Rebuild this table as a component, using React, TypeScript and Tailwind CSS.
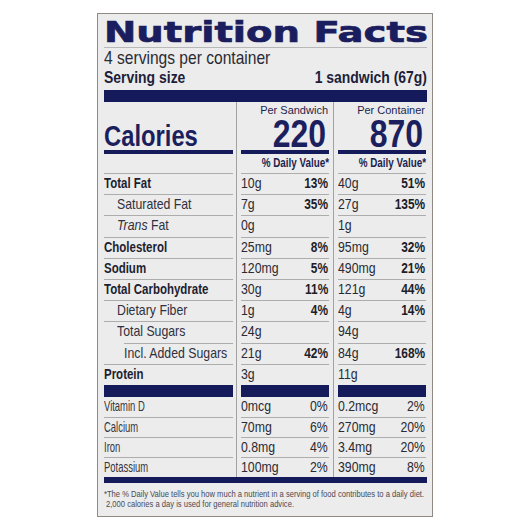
import React from "react";

const rule = "border-[#adadad]";
const navyBg = "bg-[#151a5a]";

type Nutrient = {
  label: React.ReactNode;
  kind: "main" | "sub" | "subsub";
  a: string;
  ap?: string;
  b: string;
  bp?: string;
};

const nutrients: Nutrient[] = [
  { label: "Total Fat", kind: "main", a: "10g", ap: "13%", b: "40g", bp: "51%" },
  { label: "Saturated Fat", kind: "sub", a: "7g", ap: "35%", b: "27g", bp: "135%" },
  { label: <><i>Trans</i> Fat</>, kind: "sub", a: "0g", b: "1g" },
  { label: "Cholesterol", kind: "main", a: "25mg", ap: "8%", b: "95mg", bp: "32%" },
  { label: "Sodium", kind: "main", a: "120mg", ap: "5%", b: "490mg", bp: "21%" },
  { label: "Total Carbohydrate", kind: "main", a: "30g", ap: "11%", b: "121g", bp: "44%" },
  { label: "Dietary Fiber", kind: "sub", a: "1g", ap: "4%", b: "4g", bp: "14%" },
  { label: "Total Sugars", kind: "sub", a: "24g", b: "94g" },
  { label: "Incl. Added Sugars", kind: "subsub", a: "21g", ap: "42%", b: "84g", bp: "168%" },
  { label: "Protein", kind: "main", a: "3g", b: "11g" },
];

const vitamins = [
  ["Vitamin D", "0mcg", "0%", "0.2mcg", "2%"],
  ["Calcium", "70mg", "6%", "270mg", "20%"],
  ["Iron", "0.8mg", "4%", "3.4mg", "20%"],
  ["Potassium", "100mg", "2%", "390mg", "8%"],
];

// condensed text: Arial metrics squeezed to Helvetica Condensed width
function N({ children, right }: { children: React.ReactNode; right?: boolean }) {
  return (
    <span className={`inline-block scale-x-[0.82] whitespace-nowrap ${right ? "origin-right" : "origin-left"}`}>
      {children}
    </span>
  );
}

function Col({ gap, children }: { gap: string; children: React.ReactNode }) {
  return <div className={`${gap} border-l border-[#a2a2a2] pl-[4px]`}>{children}</div>;
}

function Cell({ value, pct, lined = true, light = false }: { value: string; pct?: string; lined?: boolean; light?: boolean }) {
  return (
    <div className={`flex h-full w-[88px] justify-between text-[15px] leading-[18px] text-[#2a2a33] ${lined ? "border-t " + rule : ""}`}>
      <N>{value}</N>
      {pct && (
        <span className={light ? "pr-[1px]" : "pr-[1px] text-[14.5px] font-bold text-[#1d1d28]"}>
          <N right>{pct}</N>
        </span>
      )}
    </div>
  );
}

function Head({ gap, title, value }: { gap: string; title: string; value: string }) {
  return (
    <Col gap={gap}>
      <div className="flex h-full w-[88px] flex-col justify-end text-right text-[#1c1f4e]">
        <div className="mb-[3px] pr-[1px] text-[11px] leading-[12px]">{title}</div>
        <div className="h-[31px] pr-[3px] text-[39px] font-bold leading-[30px] text-[#1c1f5e]">
          <N right>{value}</N>
        </div>
        <div className={`h-[4px] ${navyBg}`} />
        <div className="mt-[2px] mb-[3px] text-[12px] font-bold leading-[14px]">
          <N right>% Daily Value*</N>
        </div>
      </div>
    </Col>
  );
}

function Bar() {
  return <div className={`h-[12px] w-[88px] ${navyBg}`} />;
}

export default function App() {
  return (
    <div className="flex h-[530px] w-full items-center justify-center bg-white">
      <div className="w-[336px] border border-[#8f8a84] bg-[#ececec] pt-[3px] pr-[5px] pb-[7px] pl-[6px] font-['Liberation_Sans',Arial,sans-serif]">
        <div className="border-b border-[#b8b8b8] font-['DejaVu_Sans',sans-serif] text-[29px] font-bold leading-[30px] text-[#1a1d5e]">
          <span className="inline-block origin-left scale-x-[1.33] [-webkit-text-stroke:0.7px_#1a1d5e]">Nutrition Facts</span>
        </div>
        <div className="text-[19px] leading-[20px] text-[#2a2a33]">
          <N>4 servings per container</N>
        </div>
        <div className="flex justify-between text-[17px] font-bold leading-[19px] text-[#1d1e3a]">
          <N>Serving size</N>
          <N right>1 sandwich (67g)</N>
        </div>
        <div className={`mt-[3px] h-[12px] ${navyBg}`} />

        <div className="flex h-[71px]">
          <div className="flex w-[129px] flex-col justify-end">
            <div className="text-[29px] font-bold leading-[28px] text-[#1c1f5e]">
              <N>Calories</N>
            </div>
            <div className={`h-[4px] ${navyBg}`} />
            <div className="h-[19px]" />
          </div>
          <Head gap="ml-[3px]" title="Per Sandwich" value="220" />
          <Head gap="ml-[4px]" title="Per Container" value="870" />
        </div>

        {nutrients.map((n, i) => (
          <div key={i} className="flex h-[21.2px]">
            <div className="w-[129px]">
              <div
                className={`h-full border-t leading-[18px] ${rule} ${
                  n.kind === "main"
                    ? "text-[14px] font-bold text-[#1d1e30]"
                    : n.kind === "sub"
                    ? "pl-[13px] text-[15px] text-[#2f3040]"
                    : "ml-[20px] text-[15px] text-[#2f3040]"
                }`}
              >
                <N>{n.label}</N>
              </div>
            </div>
            <Col gap="ml-[3px]">
              <Cell value={n.a} pct={n.ap} />
            </Col>
            <Col gap="ml-[4px]">
              <Cell value={n.b} pct={n.bp} />
            </Col>
          </div>
        ))}

        <div className="flex">
          <div className={`h-[12px] w-[129px] ${navyBg}`} />
          <Col gap="ml-[3px]">
            <Bar />
          </Col>
          <Col gap="ml-[4px]">
            <Bar />
          </Col>
        </div>

        {vitamins.map((v, i) => (
          <div key={v[0]} className="flex h-[20px]">
            <div className={`w-[129px] text-[15px] leading-[18px] text-[#33343f] ${i > 0 ? "border-t " + rule : ""}`}>
              <span className="inline-block origin-left scale-x-[0.63]">{v[0]}</span>
            </div>
            <Col gap="ml-[3px]">
              <Cell value={v[1]} pct={v[2]} lined={i > 0} light />
            </Col>
            <Col gap="ml-[4px]">
              <Cell value={v[3]} pct={v[4]} lined={i > 0} light />
            </Col>
          </div>
        ))}

        <div className={`h-[6px] ${navyBg}`} />
        <div className="mt-[6px] text-[9.5px] leading-[10px] text-[#4a4a55]">
          <div className="whitespace-nowrap">
            <span className="inline-block origin-left scale-x-[0.8]">
              *The % Daily Value tells you how much a nutrient in a serving of food contributes to a daily diet.
            </span>
          </div>
          <div className="whitespace-nowrap pl-[2px]">
            <span className="inline-block origin-left scale-x-[0.8]">
              2,000 calories a day is used for general nutrition advice.
            </span>
          </div>
        </div>
      </div>
    </div>
  );
}
